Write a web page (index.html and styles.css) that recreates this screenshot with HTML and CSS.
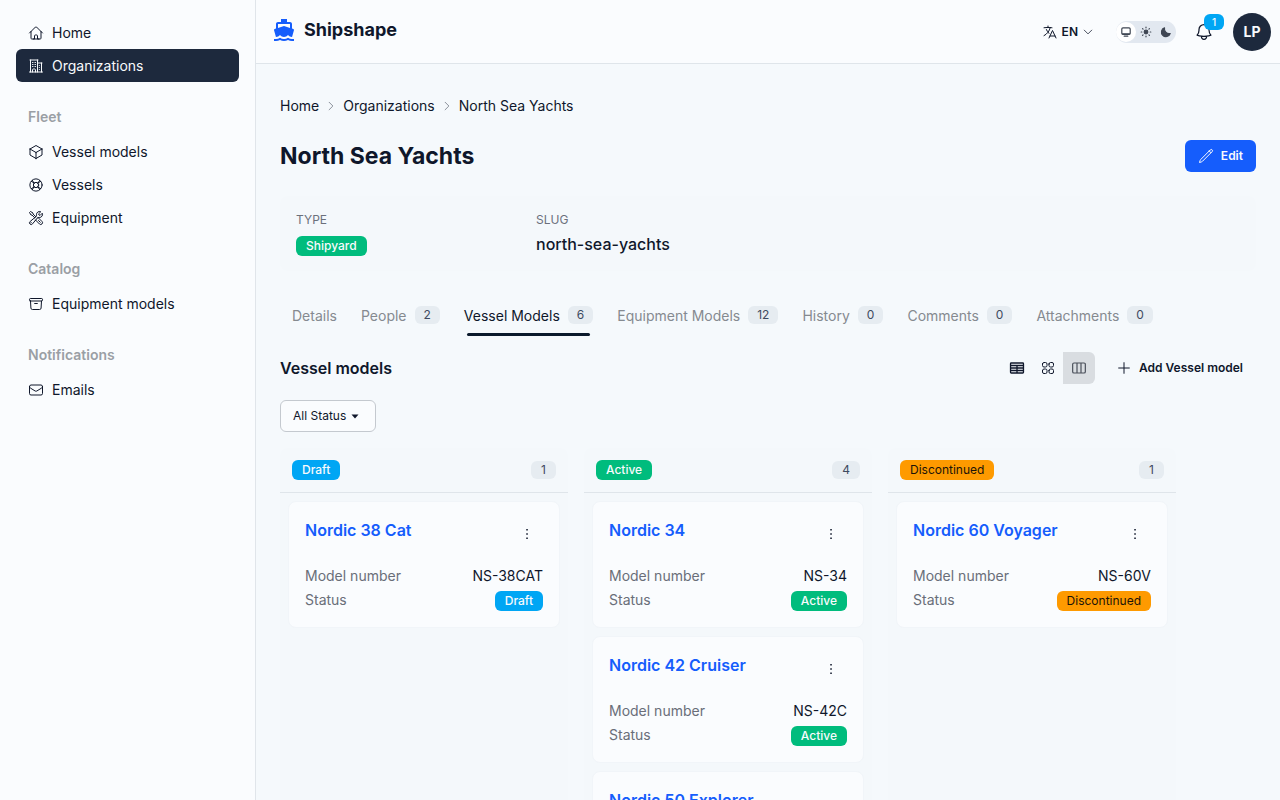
FILE: index.html
```html
<!DOCTYPE html>
<html lang="en">
<head>
<meta charset="utf-8">
<meta name="viewport" content="width=device-width, initial-scale=1">
<title>North Sea Yachts - Shipshape</title>
<link rel="stylesheet" href="styles.css">
</head>
<body>
<svg class="sprite" aria-hidden="true">
  <symbol id="i-home" viewBox="0 0 24 24"><path d="m2.25 12 8.954-8.955c.44-.439 1.152-.439 1.591 0L21.75 12M4.5 9.75v10.125c0 .621.504 1.125 1.125 1.125H9.75v-4.875c0-.621.504-1.125 1.125-1.125h2.25c.621 0 1.125.504 1.125 1.125V21h4.125c.621 0 1.125-.504 1.125-1.125V9.75M8.25 21h8.25"/></symbol>
  <symbol id="i-building" viewBox="0 0 24 24"><path d="M2.25 21h19.5m-18-18v18m10.5-18v18m6-13.5V21M6.75 6.75h.75m-.75 3h.75m-.75 3h.75m3-6h.75m-.75 3h.75m-.75 3h.75M6.75 21v-3.375c0-.621.504-1.125 1.125-1.125h2.25c.621 0 1.125.504 1.125 1.125V21M3 3h12m-.75 4.5H21m-3.75 3.75h.008v.008h-.008v-.008Zm0 3h.008v.008h-.008v-.008Zm0 3h.008v.008h-.008v-.008Z"/></symbol>
  <symbol id="i-cube" viewBox="0 0 24 24"><path d="m21 7.5-9-5.25L3 7.5m18 0-9 5.25m9-5.25v9l-9 5.25M3 7.5l9 5.25M3 7.5v9l9 5.25m0-9v9"/></symbol>
  <symbol id="i-lifebuoy" viewBox="0 0 24 24"><circle cx="12" cy="12" r="9.2"/><circle cx="12" cy="12" r="4"/><path d="m5 6.6 4.4 2.4M6.6 5 9 9.4M17.4 5 15 9.4M19 6.6 14.6 9M19 17.4 14.6 15M17.4 19 15 14.6M6.6 19 9 14.6M5 17.4 9.4 15"/></symbol>
  <symbol id="i-tools" viewBox="0 0 24 24"><path d="M11.42 15.17 17.25 21A2.652 2.652 0 0 0 21 17.25l-5.877-5.877M11.42 15.17l2.496-3.03c.317-.384.74-.626 1.208-.766M11.42 15.17l-4.655 5.653a2.548 2.548 0 1 1-3.586-3.586l6.837-5.63m5.108-.233c.55-.164 1.163-.188 1.743-.14a4.5 4.5 0 0 0 4.486-6.336l-3.276 3.277a3.004 3.004 0 0 1-2.25-2.25l3.276-3.276a4.5 4.5 0 0 0-6.336 4.486c.091 1.076-.071 2.264-.904 2.95l-.102.085m-1.745 1.437L5.909 7.5H4.5L2.25 3.75l1.5-1.5L7.5 4.5v1.409l4.26 4.26m-1.745 1.437 1.745-1.437m6.615 8.206L15.75 15.75M4.867 19.125h.008v.008h-.008v-.008Z"/></symbol>
  <symbol id="i-archive" viewBox="0 0 24 24"><path d="m20.25 7.5-.625 10.632a2.25 2.25 0 0 1-2.247 2.118H6.622a2.25 2.25 0 0 1-2.247-2.118L3.75 7.5M10 11.25h4M3.375 7.5h17.25c.621 0 1.125-.504 1.125-1.125v-1.5c0-.621-.504-1.125-1.125-1.125H3.375c-.621 0-1.125.504-1.125 1.125v1.5c0 .621.504 1.125 1.125 1.125Z"/></symbol>
  <symbol id="i-mail" viewBox="0 0 24 24"><path d="M21.75 6.75v10.5a2.25 2.25 0 0 1-2.25 2.25h-15a2.25 2.25 0 0 1-2.25-2.25V6.75m19.5 0A2.25 2.25 0 0 0 19.5 4.5h-15a2.25 2.25 0 0 0-2.25 2.25m19.5 0v.243a2.25 2.25 0 0 1-1.07 1.916l-7.5 4.615a2.25 2.25 0 0 1-2.36 0L3.32 8.91a2.25 2.25 0 0 1-1.07-1.916V6.75"/></symbol>
  <symbol id="i-language" viewBox="0 0 24 24"><path d="m10.5 21 5.25-11.25L21 21m-9-3h7.5M3 5.621a48.474 48.474 0 0 1 6-.371m0 0c1.12 0 2.233.038 3.334.114M9 5.25V3m3.334 2.364C11.176 10.658 7.69 15.08 3 17.502m9.334-12.138c.896.061 1.785.147 2.666.257m-4.589 8.495a18.023 18.023 0 0 1-3.827-5.802"/></symbol>
  <symbol id="i-down" viewBox="0 0 24 24"><path d="m19.5 8.25-7.5 7.5-7.5-7.5"/></symbol>
  <symbol id="i-right" viewBox="0 0 24 24"><path d="m8.25 4.5 7.5 7.5-7.5 7.5"/></symbol>
  <symbol id="i-bell" viewBox="0 0 24 24"><path d="M14.857 17.082a23.848 23.848 0 0 0 5.454-1.31A8.967 8.967 0 0 1 18 9.75V9A6 6 0 0 0 6 9v.75a8.967 8.967 0 0 1-2.312 6.022c1.733.64 3.56 1.085 5.455 1.31m5.714 0a24.255 24.255 0 0 1-5.714 0m5.714 0a3 3 0 1 1-5.714 0"/></symbol>
  <symbol id="i-pencil" viewBox="0 0 24 24"><path d="m16.862 4.487 1.687-1.688a1.875 1.875 0 1 1 2.652 2.652L6.832 19.82a4.5 4.5 0 0 1-1.897 1.13l-2.685.8.8-2.685a4.5 4.5 0 0 1 1.13-1.897L16.863 4.487Zm0 0L19.5 7.125"/></symbol>
  <symbol id="i-table" viewBox="0 0 24 24"><path d="M3.4 4.5h17.2c.6 0 1.1.5 1.1 1.1v12.8c0 .6-.5 1.1-1.1 1.1H3.4c-.6 0-1.1-.5-1.1-1.1V5.600c0-.6.5-1.100 1.100-1.100ZM2.300 8.250h19.400M2.300 12h19.400M2.300 15.750h19.400M12 8.250V19.500" stroke-width="2"/></symbol>
  <symbol id="i-squares" viewBox="0 0 24 24"><path d="M3.75 6A2.25 2.25 0 0 1 6 3.75h2.25A2.25 2.25 0 0 1 10.5 6v2.25a2.25 2.25 0 0 1-2.25 2.25H6a2.25 2.25 0 0 1-2.25-2.25V6ZM3.75 15.75A2.25 2.25 0 0 1 6 13.5h2.25a2.25 2.25 0 0 1 2.25 2.25V18a2.25 2.25 0 0 1-2.25 2.25H6A2.25 2.25 0 0 1 3.75 18v-2.25ZM13.5 6a2.25 2.25 0 0 1 2.25-2.25H18A2.25 2.25 0 0 1 20.25 6v2.25A2.25 2.25 0 0 1 18 10.5h-2.25a2.25 2.25 0 0 1-2.25-2.25V6ZM13.5 15.75a2.25 2.25 0 0 1 2.25-2.25H18a2.25 2.25 0 0 1 2.25 2.25V18A2.25 2.25 0 0 1 18 20.25h-2.25A2.25 2.25 0 0 1 13.5 18v-2.25Z"/></symbol>
  <symbol id="i-columns" viewBox="0 0 24 24"><path d="M9 4.500v15m6-15v15m-10.500 0h15c1.200 0 2-.8 2-2V6.500c0-1.200-.8-2-2-2h-15c-1.200 0-2 .8-2 2v11c0 1.200.8 2 2 2Z" stroke-width="1.800"/></symbol>
  <symbol id="i-plus" viewBox="0 0 24 24"><path d="M12 4v16m8-8h-16"/></symbol>
  <symbol id="i-dots" viewBox="0 0 24 24"><path d="M10.900 4.500h2.300v2.300h-2.300zM10.900 10.900h2.300v2.300h-2.300zM10.900 17.300h2.300v2.300h-2.300z" fill="currentColor" stroke="none"/></symbol>
</svg>

<div class="app">
  <nav class="sidebar" aria-label="Main">
    <a class="nav-item" href="#"><svg class="icon"><use href="#i-home"/></svg>Home</a>
    <a class="nav-item nav-active" href="#" aria-current="page"><svg class="icon"><use href="#i-building"/></svg>Organizations</a>
    <h2 class="nav-title">Fleet</h2>
    <a class="nav-item" href="#"><svg class="icon"><use href="#i-cube"/></svg>Vessel models</a>
    <a class="nav-item" href="#"><svg class="icon"><use href="#i-lifebuoy"/></svg>Vessels</a>
    <a class="nav-item" href="#"><svg class="icon"><use href="#i-tools"/></svg>Equipment</a>
    <h2 class="nav-title">Catalog</h2>
    <a class="nav-item" href="#"><svg class="icon"><use href="#i-archive"/></svg>Equipment models</a>
    <h2 class="nav-title">Notifications</h2>
    <a class="nav-item" href="#"><svg class="icon"><use href="#i-mail"/></svg>Emails</a>
  </nav>

  <div class="page">
    <header class="topbar">
      <a class="brand" href="#">
        <svg class="logo" viewBox="0 0 24 24" aria-hidden="true"><path d="M20 21c-1.390 0-2.780-.470-4-1.320-2.440 1.710-5.560 1.710-8 0C6.780 20.530 5.390 21 4 21H2v2h2c1.380 0 2.740-.350 4-.990 2.520 1.290 5.480 1.290 8 0 1.260.650 2.620.990 4 .990h2v-2h-2zM3.950 19H4c1.600 0 3.020-.880 4-2 .980 1.120 2.400 2 4 2s3.020-.880 4-2c.980 1.120 2.400 2 4 2h.050l1.890-6.680c.080-.260.060-.540-.060-.780s-.340-.420-.600-.500L20 10.620V6c0-1.100-.900-2-2-2h-3V1H9v3H6c-1.100 0-2 .900-2 2v4.620l-1.290.420c-.260.080-.480.260-.600.500s-.150.520-.060.780L3.950 19zM6 6h12v3.970L12 8 6 9.970V6z"/></svg>
        Shipshape
      </a>
      <div class="tools">
        <button class="lang" type="button"><svg class="icon"><use href="#i-language"/></svg>EN<svg class="icon icon-sm"><use href="#i-down"/></svg></button>
        <div class="theme" role="radiogroup" aria-label="Theme">
          <label class="theme-opt"><input type="radio" name="theme" aria-label="System" checked><svg viewBox="0 0 20 20"><rect x="3" y="3" width="14" height="11" rx="2"/><path d="M7 17h6M4 13h12"/></svg></label>
          <label class="theme-opt"><input type="radio" name="theme" aria-label="Light"><svg viewBox="0 0 20 20"><circle cx="10" cy="10" r="3" fill="currentColor"/><path d="M10 2v1M10 17v1M2 10h1M17 10h1M4.300 4.300l.8.8M14.900 14.900l.8.8M4.300 15.700l.8-.8M14.900 5.100l.8-.8"/></svg></label>
          <label class="theme-opt"><input type="radio" name="theme" aria-label="Dark"><svg viewBox="0 0 20 20"><path d="M7.500 3A7.500 7.500 0 1 0 17 12.500 8 8 0 0 1 7.500 3Z" fill="currentColor"/></svg></label>
        </div>
        <button class="bell" type="button" aria-label="Notifications"><svg class="icon icon-lg"><use href="#i-bell"/></svg><span class="bell-count">1</span></button>
        <button class="avatar" type="button">LP</button>
      </div>
    </header>

    <main class="content">
      <nav class="crumbs" aria-label="Breadcrumb">
        <a href="#">Home</a><svg class="icon"><use href="#i-right"/></svg><a href="#">Organizations</a><svg class="icon"><use href="#i-right"/></svg><span>North Sea Yachts</span>
      </nav>

      <div class="heading">
        <h1>North Sea Yachts</h1>
        <button class="btn btn-primary" type="button"><svg class="icon"><use href="#i-pencil"/></svg>Edit</button>
      </div>

      <dl class="facts">
        <div class="fact"><dt>TYPE</dt><dd><span class="badge badge-green">Shipyard</span></dd></div>
        <div class="fact"><dt>SLUG</dt><dd>north-sea-yachts</dd></div>
      </dl>

      <div class="tabs" role="tablist">
        <button class="tab" role="tab" type="button">Details</button>
        <button class="tab" role="tab" type="button">People<span class="count">2</span></button>
        <button class="tab tab-active" role="tab" type="button" aria-selected="true">Vessel Models<span class="count">6</span></button>
        <button class="tab" role="tab" type="button">Equipment Models<span class="count">12</span></button>
        <button class="tab" role="tab" type="button">History<span class="count">0</span></button>
        <button class="tab" role="tab" type="button">Comments<span class="count">0</span></button>
        <button class="tab" role="tab" type="button">Attachments<span class="count">0</span></button>
      </div>

      <div class="section-head">
        <h2>Vessel models</h2>
        <div class="actions">
          <div class="views">
            <button class="view" type="button" aria-label="Table"><svg class="icon"><use href="#i-table"/></svg></button>
            <button class="view" type="button" aria-label="Grid"><svg class="icon"><use href="#i-squares"/></svg></button>
            <button class="view view-on" type="button" aria-label="Board" aria-pressed="true"><svg class="icon"><use href="#i-columns"/></svg></button>
          </div>
          <button class="btn" type="button"><svg class="icon"><use href="#i-plus"/></svg>Add Vessel model</button>
        </div>
      </div>

      <div class="filter">
        <select class="filter-select" aria-label="Status"><option>All Status</option></select>
        <svg class="caret" viewBox="0 0 8 5" aria-hidden="true"><path d="M.5.500h7L4 4.500Z"/></svg>
      </div>

      <div class="board">
        <section class="column">
          <header class="column-head"><span class="badge badge-blue">Draft</span><span class="count">1</span></header>
          <div class="cards">
            <article class="card">
              <div class="card-top"><a href="#">Nordic 38 Cat</a><button class="more" type="button" aria-label="Actions"><svg class="icon"><use href="#i-dots"/></svg></button></div>
              <dl class="props"><dt>Model number</dt><dd>NS-38CAT</dd><dt>Status</dt><dd><span class="badge badge-blue">Draft</span></dd></dl>
            </article>
          </div>
        </section>
        <section class="column">
          <header class="column-head"><span class="badge badge-green">Active</span><span class="count">4</span></header>
          <div class="cards">
            <article class="card">
              <div class="card-top"><a href="#">Nordic 34</a><button class="more" type="button" aria-label="Actions"><svg class="icon"><use href="#i-dots"/></svg></button></div>
              <dl class="props"><dt>Model number</dt><dd>NS-34</dd><dt>Status</dt><dd><span class="badge badge-green">Active</span></dd></dl>
            </article>
            <article class="card">
              <div class="card-top"><a href="#">Nordic 42 Cruiser</a><button class="more" type="button" aria-label="Actions"><svg class="icon"><use href="#i-dots"/></svg></button></div>
              <dl class="props"><dt>Model number</dt><dd>NS-42C</dd><dt>Status</dt><dd><span class="badge badge-green">Active</span></dd></dl>
            </article>
            <article class="card">
              <div class="card-top"><a href="#">Nordic 50 Explorer</a></div>
            </article>
          </div>
        </section>
        <section class="column">
          <header class="column-head"><span class="badge badge-amber">Discontinued</span><span class="count">1</span></header>
          <div class="cards">
            <article class="card">
              <div class="card-top"><a href="#">Nordic 60 Voyager</a><button class="more" type="button" aria-label="Actions"><svg class="icon"><use href="#i-dots"/></svg></button></div>
              <dl class="props"><dt>Model number</dt><dd>NS-60V</dd><dt>Status</dt><dd><span class="badge badge-amber">Discontinued</span></dd></dl>
            </article>
          </div>
        </section>
      </div>
    </main>
  </div>
</div>
</body>
</html>
```
FILE: styles.css
```css
* { box-sizing: border-box; }
body {
  margin: 0;
  background: #f5f9fc;
  color: #0f172b;
  font: 14px/20px Inter, "Liberation Sans", sans-serif;
}
h1, h2, dl, dd { margin: 0; }
a { color: inherit; text-decoration: none; }
button { font: inherit; color: inherit; border: 0; padding: 0; background: none; cursor: pointer; }

.sprite { display: none; }
.icon {
  width: 16px;
  height: 16px;
  flex: none;
  fill: none;
  stroke: currentColor;
  stroke-width: 1.5;
  stroke-linecap: round;
  stroke-linejoin: round;
}
.icon-sm { width: 12px; height: 12px; }
.icon-lg { width: 20px; height: 20px; }

.app { display: flex; height: 100vh; overflow: hidden; }
.sidebar {
  flex: none;
  width: 256px;
  padding: 16px;
  background: #fafcfe;
  border-right: 1px solid #e0e5ea;
}
.nav-item {
  display: flex;
  align-items: center;
  gap: 8px;
  height: 33px;
  padding: 0 12px;
  border-radius: 6px;
}
.nav-active { background: #1d293d; color: #f8fafc; }
.nav-title {
  margin-top: 16px;
  padding: 8px 12px;
  font-size: 14px;
  line-height: 21px;
  font-weight: 600;
  color: #9a9fa5;
}

.page { flex: 1; min-width: 0; display: flex; flex-direction: column; }
.topbar {
  flex: none;
  display: flex;
  align-items: center;
  justify-content: space-between;
  height: 64px;
  padding: 0 9px 0 16px;
  background: #fafcfe;
  border-bottom: 1px solid #dfe5ea;
}
.brand {
  display: flex;
  align-items: center;
  gap: 8px;
  padding-bottom: 3px;
  font-size: 18px;
  line-height: 28px;
  font-weight: 700;
}
.logo { width: 24px; height: 24px; fill: #155dfc; }
.tools { display: flex; align-items: center; }
.lang { display: flex; align-items: center; gap: 4px; font-size: 12px; font-weight: 600; margin-right: 22px; }
.theme { display: flex; padding: 1px 0; border-radius: 11px; background: #e2e8f0; margin-right: 18px; }
.theme-opt {
  display: grid;
  place-items: center;
  width: 20px;
  height: 20px;
  border-radius: 10px;
  color: #3f4653;
}
.theme-opt:has(input:checked) { background: #ffffff; }
.theme-opt input { appearance: none; position: absolute; margin: 0; width: 0; height: 0; }
.theme-opt svg { width: 12px; height: 12px; fill: none; stroke: currentColor; stroke-width: 2; stroke-linecap: round; stroke-linejoin: round; }
.bell { position: relative; display: grid; place-items: center; margin-right: 19px; }
.bell-count {
  position: absolute;
  left: 10px;
  top: -8px;
  padding: 0 8px;
  border-radius: 6px;
  background: #00a6f4;
  color: #f8fafc;
  font-size: 10px;
  line-height: 16px;
  font-weight: 500;
}
.avatar { width: 38px; height: 38px; border-radius: 50%; background: #1d293d; color: #f8fafc; font-weight: 700; }

.content { flex: 1; min-height: 0; overflow: hidden; padding: 32px 24px 0; }
.crumbs { display: flex; align-items: center; gap: 4px; }
.crumbs .icon { width: 16px; height: 12px; color: #8c929c; stroke-width: 2; }
.heading { display: flex; align-items: center; justify-content: space-between; margin: 24px 0; }
h1 { font-size: 23px; line-height: 32px; font-weight: 700; }
.btn {
  display: flex;
  align-items: center;
  gap: 7px;
  height: 32px;
  padding: 0 13px;
  border-radius: 6px;
  font-size: 12px;
  font-weight: 600;
}
.btn-primary { background: #155dfc; color: #f8fafc; }

.facts {
  display: grid;
  grid-template-columns: repeat(4, 1fr);
  column-gap: 16px;
  padding: 16px 16px 15px;
  border-radius: 8px;
  background: #f4f8fb;
}
.facts dt { font-size: 12px; line-height: 16px; color: #6b707b; }
.facts dd { padding-top: 4px; font-size: 16px; line-height: 24px; font-weight: 500; }
.badge {
  display: inline-block;
  vertical-align: middle;
  padding: 0 10px;
  border-radius: 6px;
  font-size: 12px;
  line-height: 20px;
  font-weight: 500;
}
.badge-green { background: #00bc7d; color: #f8fafc; }
.badge-blue { background: #00a6f4; color: #f8fafc; }
.badge-amber { background: #fe9a00; color: #1c1408; font-weight: 400; }
.count {
  padding: 0 9px;
  border-radius: 6px;
  background: #e6ecf1;
  color: #3e4a60;
  font-size: 12px;
  line-height: 18px;
}

.tabs { display: flex; margin-top: 25px; }
.tab {
  position: relative;
  display: flex;
  align-items: center;
  gap: 8px;
  height: 40px;
  padding: 0 12px;
  color: #858a90;
}
.tab .count { margin-bottom: 2px; }
.tab-active { color: #0f172b; }
.tab-active::after {
  content: "";
  position: absolute;
  left: 10%;
  bottom: 0;
  width: 80%;
  height: 3px;
  border-radius: 2px;
  background: #0b1a2c;
}

.section-head { display: flex; align-items: center; justify-content: space-between; margin: 16px 0; }
.section-head h2 { font-size: 16px; line-height: 24px; font-weight: 600; }
.actions { display: flex; align-items: center; gap: 8px; }
.views { display: flex; }
.view { display: grid; place-items: center; width: 31px; height: 32px; }
.view-on { width: 32px; background: #d9dde1; color: #4a505b; border-radius: 0 6px 6px 0; }

.filter { position: relative; width: fit-content; }
.filter-select {
  display: block;
  appearance: none;
  height: 32px;
  padding: 0 28px 0 12px;
  border: 1px solid #c4c9cf;
  border-radius: 6px;
  background: #fafcfe;
  color: inherit;
  font: 12px/16px Inter, "Liberation Sans", sans-serif;
}
.caret { position: absolute; right: 17px; top: 14px; width: 8px; height: 5px; fill: #0f172b; pointer-events: none; }

.board { display: flex; gap: 16px; margin-top: 16px; }
.column { flex: none; width: 288px; min-height: 400px; border-radius: 8px; background: #f4f8fb; }
.column-head {
  display: flex;
  align-items: center;
  justify-content: space-between;
  padding: 12px;
  border-bottom: 1px solid #dfe5ea;
}
.column-head .count { padding: 0 10px; }
.cards { display: grid; gap: 8px; padding: 8px; }
.card { padding: 16px; border: 1px solid #f1f5f9; border-radius: 8px; background: #fafcfe; }
.card-top { display: flex; align-items: flex-start; justify-content: space-between; min-height: 32px; font-size: 16px; line-height: 24px; font-weight: 600; color: #155dfc; }
.more { display: grid; place-items: center; width: 32px; height: 32px; color: #0f172b; }
.props { display: grid; grid-template-columns: 1fr auto; row-gap: 4px; margin-top: 16px; }
.props dt { color: #696e79; }
.props dd { justify-self: end; }
.props .badge { display: block; margin-top: 1px; }
```
